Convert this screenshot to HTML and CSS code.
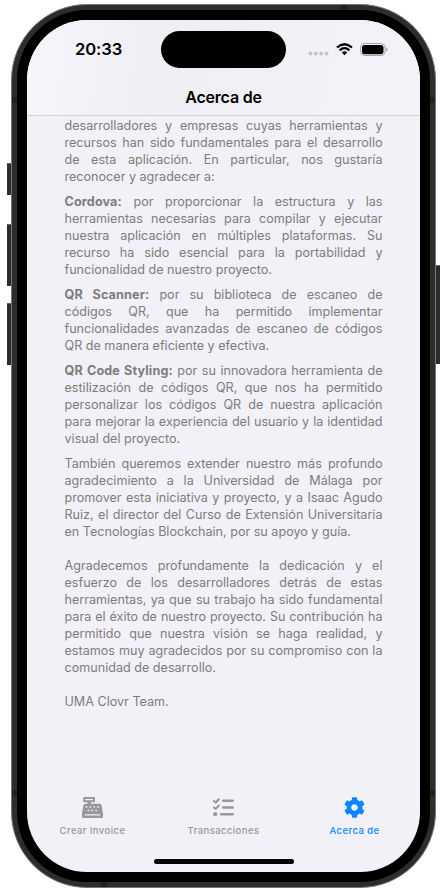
FILE: index.html
```html
<!DOCTYPE html>
<html lang="es">
<head>
<meta charset="utf-8">
<title>Acerca de</title>
<link rel="stylesheet" href="styles.css">
</head>
<body>
<div class="phone">
  <i class="button mute"></i><i class="button volume-up"></i><i class="button volume-down"></i><i class="button power"></i>
  <div class="frame">
    <i class="band band-tl"></i><i class="band band-bl"></i><i class="band band-tr"></i><i class="band band-br"></i><i class="band band-top"></i><i class="band band-bottom"></i>
    <div class="bezel">
      <div class="screen">
        <header class="header">
          <div class="status">
            <span class="time">20:33</span>
            <span class="island"></span>
            <span class="indicators">
              <svg width="21" height="5" viewBox="0 0 21 5" fill="#c3c3c8"><circle cx="2.5" cy="2.5" r="1.9"/><circle cx="7.8" cy="2.5" r="1.9"/><circle cx="13.1" cy="2.5" r="1.9"/><circle cx="18.4" cy="2.5" r="1.9"/></svg>
              <svg class="wifi" width="17" height="13" viewBox="0 0 17 13" fill="none" stroke="#000" stroke-width="2.3"><path d="M1 4.500Q8.500-2 16 4.500M3.600 7.300Q8.500 3 13.400 7.300"/><path d="M5.700 9.300Q8.500 7 11.300 9.300L8.500 12.200Z" fill="#000" stroke="none"/></svg>
              <svg class="battery" width="28" height="13" viewBox="0 0 28 13"><rect x=".6" y=".5" width="24.400" height="12" rx="3.900" fill="none" stroke="#a5a5a8"/><rect x="2" y="2" width="21.500" height="9.200" rx="2.600"/><path d="M26 4.500q1.500.6 1.500 2t-1.500 2z" fill="#a5a5a8"/></svg>
            </span>
          </div>
          <h1 class="title">Acerca de</h1>
        </header>
        <main class="content">
          <p><span>desarrolladores y empresas cuyas herramientas y</span><span>recursos han sido fundamentales para el desarrollo</span><span>de esta aplicación. En particular, nos gustaría</span><span>reconocer y agradecer a:</span></p>
          <p><span><b>Cordova:</b> por proporcionar la estructura y las</span><span>herramientas necesarias para compilar y ejecutar</span><span>nuestra aplicación en múltiples plataformas. Su</span><span>recurso ha sido esencial para la portabilidad y</span><span>funcionalidad de nuestro proyecto.</span></p>
          <p><span><b>QR Scanner:</b> por su biblioteca de escaneo de</span><span>códigos QR, que ha permitido implementar</span><span>funcionalidades avanzadas de escaneo de códigos</span><span>QR de manera eficiente y efectiva.</span></p>
          <p><span><b>QR Code Styling:</b> por su innovadora herramienta de</span><span>estilización de códigos QR, que nos ha permitido</span><span>personalizar los códigos QR de nuestra aplicación</span><span>para mejorar la experiencia del usuario y la identidad</span><span>visual del proyecto.</span></p>
          <p class="thanks"><span>También queremos extender nuestro más profundo</span><span>agradecimiento a la Universidad de Málaga por</span><span>promover esta iniciativa y proyecto, y a Isaac Agudo</span><span>Ruiz, el director del Curso de Extensión Universitaria</span><span>en Tecnologías Blockchain, por su apoyo y guía.</span></p>
          <p class="thanks"><span>Agradecemos profundamente la dedicación y el</span><span>esfuerzo de los desarrolladores detrás de estas</span><span>herramientas, ya que su trabajo ha sido fundamental</span><span>para el éxito de nuestro proyecto. Su contribución ha</span><span>permitido que nuestra visión se haga realidad, y</span><span>estamos muy agradecidos por su compromiso con la</span><span>comunidad de desarrollo.</span></p>
          <p><span>UMA Clovr Team.</span></p>
        </main>
        <nav class="tabs">
          <a class="tab">
            <svg viewBox="0 0 21 21" width="21" height="21" fill="currentColor" fill-rule="evenodd"><path d="M2.200 0h9.800q1 0 1 1v3.200q0 1-1 1H8.800v1.600h8.700q1.800 0 2.100 1.700L21 16.500v3q0 1.500-1.500 1.500h-18Q0 21 0 19.500v-3L1.400 8.500Q1.700 6.800 3.500 6.800h2V5.200H2.200q-1 0-1-1V1q0-1 1-1zM3.200 1.900v1.400h7.800V1.900zM2.600 17.300v1.300h15.800v-1.300zM3.600 9.200v1.600h1.600V9.200zm3.900 0v1.600h1.600V9.200zm3.900 0v1.600H13V9.200zm3.900 0v1.600h1.600V9.200zM5.600 12.700v1.600h1.600v-1.600zm3.900 0v1.600h1.600v-1.600zm3.900 0v1.600H15v-1.600z"/></svg>
            <span>Crear Invoice</span>
          </a>
          <a class="tab">
            <svg viewBox="0 0 21 21" width="21" height="21" fill="none" stroke="currentColor" stroke-width="2" stroke-linecap="round" stroke-linejoin="round"><path d="M1 4l1.700 1.500L5.800 2.200M1 10.400l1.700 1.500 3.100-3.300"/><path d="M10.300 3.800h9.400M10.300 10.500h9.400M8.200 17.200h11.500" stroke-width="2.600"/><circle cx="2.200" cy="17.200" r="2.100" fill="currentColor" stroke="none"/></svg>
            <span>Transacciones</span>
          </a>
          <a class="tab active">
            <svg viewBox="4 4 504 504" width="21" height="21" fill="currentColor"><path d="M487.400 315.700l-42.600-24.600c4.300-23.200 4.300-47 0-70.200l42.600-24.600c4.900-2.800 7.100-8.600 5.500-14-11.100-35.600-30-67.800-54.700-94.600-3.800-4.100-10-5.100-14.800-2.300L380.800 110c-17.900-15.400-38.500-27.300-60.800-35.100V25.800c0-5.600-3.900-10.500-9.400-11.700-36.700-8.200-74.300-7.800-109.200 0-5.500 1.200-9.400 6.100-9.400 11.700V75c-22.200 7.900-42.800 19.800-60.800 35.100L88.700 85.500c-4.900-2.800-11-1.900-14.800 2.300-24.700 26.700-43.600 58.900-54.700 94.600-1.700 5.400.6 11.200 5.500 14L67.300 221c-4.300 23.200-4.300 47 0 70.200l-42.600 24.600c-4.900 2.800-7.100 8.600-5.500 14 11.100 35.600 30 67.800 54.700 94.600 3.800 4.100 10 5.100 14.800 2.300l42.600-24.600c17.900 15.400 38.500 27.300 60.800 35.100v49.200c0 5.600 3.900 10.500 9.400 11.700 36.700 8.200 74.300 7.800 109.200 0 5.500-1.200 9.400-6.100 9.400-11.700v-49.200c22.200-7.900 42.800-19.800 60.800-35.100l42.600 24.600c4.900 2.800 11 1.900 14.800-2.300 24.700-26.700 43.600-58.900 54.700-94.600 1.500-5.500-.7-11.300-5.600-14.100zM256 336c-44.100 0-80-35.900-80-80s35.900-80 80-80 80 35.900 80 80-35.900 80-80 80z"/></svg>
            <span>Acerca de</span>
          </a>
        </nav>
        <div class="home"></div>
      </div>
    </div>
  </div>
</div>
</body>
</html>
```
FILE: styles.css
```css
* { box-sizing: border-box; }
body { margin: 0; background: #fff; font-family: Inter, "Liberation Sans", sans-serif; overflow: hidden; }
.phone { position: relative; width: 425px; height: 884px; margin: 4px 0 0 11px; }
.frame { position: relative; height: 100%; padding: 5px; background: #2d2d2d; border: 1px solid #777; border-radius: 76px; }
.bezel { height: 100%; padding: 10px; background: #000; border-radius: 70px; }
.screen { display: flex; flex-direction: column; height: 100%; overflow: hidden; background: #f2f1f7; border-radius: 60px; }

/* Side buttons and antenna bands on the casing */
.button { position: absolute; left: -4px; width: 5px; background: #2c2c2c; border-top: 1px solid #666; }
.mute { top: 159px; height: 32px; }
.volume-up { top: 220px; height: 62px; }
.volume-down { top: 299px; height: 62px; }
.power { left: 424px; top: 261px; height: 99px; width: 5px; }
.band { position: absolute; width: 5px; height: 6px; background: #202020; }
.band-tl { left: 0; top: 92px; }
.band-bl { left: 0; bottom: 91px; }
.band-tr { right: 0; top: 92px; }
.band-br { right: 0; bottom: 91px; }
.band-top { left: 329px; top: 0; width: 6px; height: 5px; }
.band-bottom { left: 89px; bottom: 0; width: 6px; height: 5px; }

.header { flex: none; height: 96px; border-bottom: 1px solid #d5d5d9; background: linear-gradient(100deg, #f6f5fb 5%, #efeef3 32%, #f3f2f8 85%); }
.status { display: grid; grid-template-columns: 134px 125px 134px; height: 59px; padding-top: 11px; }
.time { padding: 8px 0 0 48px; font-size: 16.600px; line-height: 21px; font-weight: 600; letter-spacing: -.1px; }
.island { height: 37px; border-radius: 19px; background: #000; }
.indicators { display: flex; align-items: flex-start; padding-left: 22px; }
.indicators svg { flex: none; margin-top: 20px; }
.indicators .wifi { margin: 12px 0 0 6.500px; }
.indicators .battery { margin: 12px 0 0 7px; }
.title { margin: 8px 0 0; text-align: center; font-size: 16px; line-height: 21px; font-weight: 600; letter-spacing: -.2px; }

.content { flex: 1; padding: 1px 37.500px 0; color: #7d7c80; font-size: 12.600px; line-height: 17px; }
.content p { margin: 0 0 8px; }
.content .thanks { margin-bottom: 17px; }
.content span { display: block; white-space: nowrap; text-align-last: justify; }
.content p span:last-child { text-align-last: left; }
.content b { font-weight: 700; letter-spacing: .15px; }

.tabs { flex: none; display: grid; grid-template-columns: repeat(3, 1fr); height: 62px; }
.tab { display: flex; flex-direction: column; align-items: center; color: #98979b; font-size: 9.500px; line-height: 12px; font-weight: 500; letter-spacing: .42px; }
.tab svg { margin: 0 0 7px; }
.active { color: #0a87ff; }
.home { flex: none; width: 140px; height: 5px; margin: 0 auto 8px; background: #000; border-radius: 3px; }
```
